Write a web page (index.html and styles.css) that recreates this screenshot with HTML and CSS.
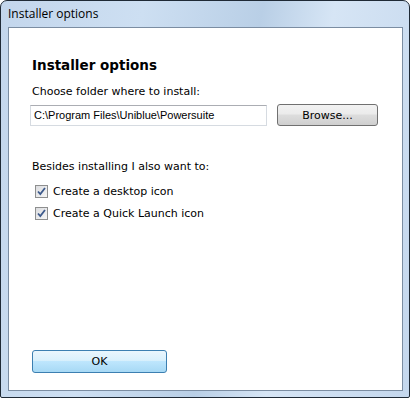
FILE: index.html
```html
<!DOCTYPE html>
<html lang="en">

<head>
    <meta charset="UTF-8">
    <title>Installer options</title>
    <link rel="stylesheet" href="styles.css">
</head>

<body>
    <div class="window">
        <div class="titlebar">Installer options</div>
        <div class="client">
            <h1>Installer options</h1>
            <p class="label">Choose folder where to install:</p>
            <div class="folder-row">
                <input type="text" class="path" value="C:\Program Files\Uniblue\Powersuite">
                <button type="button" class="btn browse">Browse...</button>
            </div>
            <p class="label extras">Besides installing I also want to:</p>
            <label class="check">
                <span class="box"><svg width="11" height="11" viewBox="0 0 11 11"><path d="M2 5.5 L4.3 8 L9 2" fill="none" stroke="#3d5a8c" stroke-width="1.8"/></svg></span>
                Create a desktop icon
            </label>
            <label class="check">
                <span class="box"><svg width="11" height="11" viewBox="0 0 11 11"><path d="M2 5.5 L4.3 8 L9 2" fill="none" stroke="#3d5a8c" stroke-width="1.8"/></svg></span>
                Create a Quick Launch icon
            </label>
            <div class="spacer"></div>
            <button type="button" class="btn ok">OK</button>
        </div>
    </div>
</body>

</html>
```

FILE: styles.css
```css
html,
body {
    margin: 0;
    padding: 0;
    background: #ffffff;
}

.window {
    box-sizing: border-box;
    width: 410px;
    height: 398px;
    border: 1px solid #1f2a36;
    border-radius: 7px 7px 2px 2px;
    background: linear-gradient(100deg, #c3d6ec 0%, #cddff2 30%, #b9cfe6 55%, #d6e5f5 70%, #c4d7ed 100%);
    padding: 0 6px 6px 7px;
    display: flex;
    flex-direction: column;
}

.titlebar {
    height: 26px;
    line-height: 25px;
    font-family: "Open Sans", sans-serif;
    font-size: 12px;
    color: #000;
}

.client {
    flex: 1;
    background: #fff;
    border: 1px solid #7b8da2;
    padding: 28px 20px 17px 23px;
    display: flex;
    flex-direction: column;
    font-family: "DejaVu Sans", sans-serif;
    font-size: 11px;
    color: #000;
}

h1 {
    margin: 0;
    font-family: "DejaVu Sans", sans-serif;
    font-size: 13.5px;
    font-weight: bold;
    line-height: 18px;
}

.label {
    margin: 11px 0 0 0;
    line-height: 14px;
}

.folder-row {
    display: flex;
    align-items: center;
    margin-top: 5px;
    margin-left: -2px;
}

.path {
    box-sizing: border-box;
    width: 237px;
    height: 21px;
    border: 1px solid #d6dbe1;
    border-top-color: #abadb3;
    padding: 0 3px;
    font-family: "Liberation Sans", sans-serif;
    font-size: 11px;
    color: #000;
}

.btn {
    box-sizing: border-box;
    border: 1px solid #707070;
    border-radius: 3px;
    font-family: "DejaVu Sans", sans-serif;
    font-size: 11px;
    color: #000;
    padding: 0;
}

.browse {
    width: 101px;
    height: 22px;
    margin-left: 10px;
    background: linear-gradient(#f2f2f2 0%, #ebebeb 45%, #dddddd 50%, #cfcfcf 100%);
}

.extras {
    margin-top: 34px;
}

.check {
    display: flex;
    align-items: center;
    margin-top: 11px;
    line-height: 13px;
}

.check + .check {
    margin-top: 9px;
}

.box {
    box-sizing: border-box;
    width: 13px;
    height: 13px;
    margin-left: 3px;
    margin-right: 5px;
    border: 1px solid #8e8f8f;
    background: linear-gradient(135deg, #dcdde0, #f6f6f6);
    display: flex;
}

.spacer {
    flex: 1;
}

.ok {
    width: 135px;
    height: 23px;
    border-color: #3c7fb1;
    background: linear-gradient(#eaf6fd 0%, #d9f0fc 45%, #bee6fd 50%, #a7d9f5 100%);
}
```
